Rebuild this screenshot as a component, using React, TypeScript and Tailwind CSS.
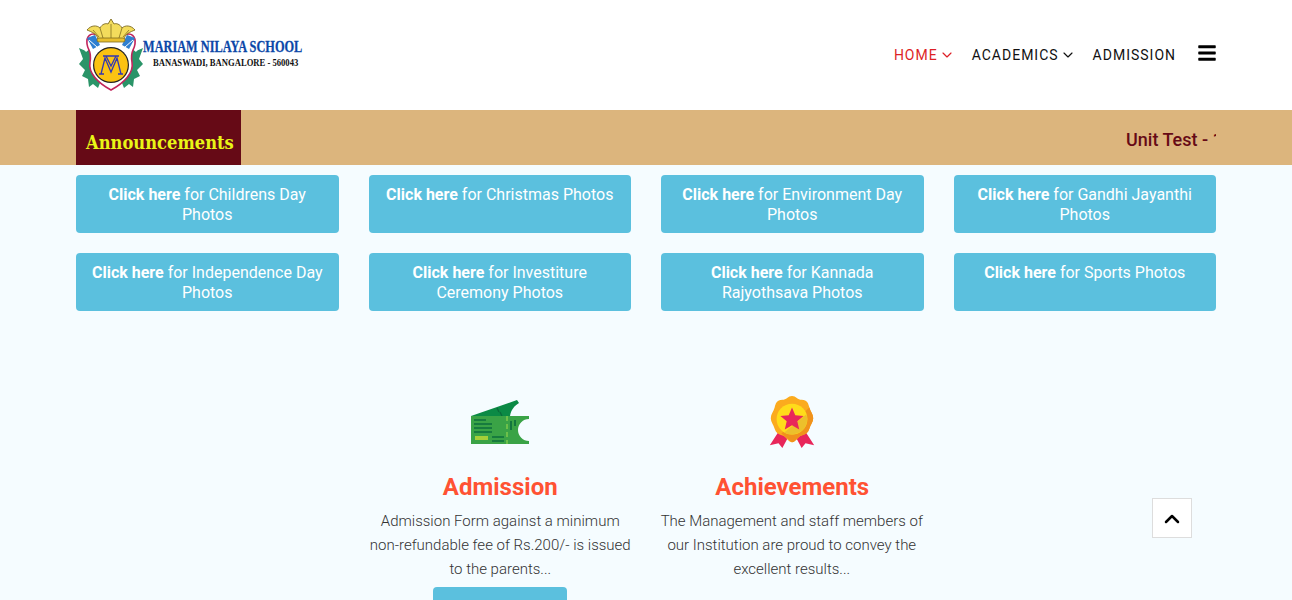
import { ChevronDown, ChevronUp } from "lucide-react";
import { FaBars } from "react-icons/fa";

const roboto = { fontFamily: "Roboto, sans-serif" };

const photoLinks = [
  "Childrens Day Photos",
  "Christmas Photos",
  "Environment Day Photos",
  "Gandhi Jayanthi Photos",
  "Independence Day Photos",
  "Investiture Ceremony Photos",
  "Kannada Rajyothsava Photos",
  "Sports Photos",
];

function Crest() {
  return (
    <svg width="66" height="74" viewBox="0 0 66 74" className="shrink-0">
      {/* leaves */}
      <g fill="#2a9468">
        <path d="M1 30 C4 32 6 31 8 34 L13 30 L13 40 L20 46 L24 60 L30 66 L22 65 L20 70 L15 66 L11 69 L10 61 L4 58 L7 52 L1 46 L5 41 Z" />
        <path d="M65 30 C62 32 60 31 58 34 L53 30 L53 40 L46 46 L42 60 L36 66 L44 65 L46 70 L51 66 L55 69 L56 61 L62 58 L59 52 L65 46 L61 41 Z" />
      </g>
      {/* shield */}
      <path d="M9 26 C8 18 13 14 19 17 C24 21 28 19 33 18 C38 19 42 21 47 17 C53 14 58 18 57 26 C56 33 52 33 54 44 C56 55 46 65 33 72 C20 65 10 55 12 44 C14 33 10 33 9 26 Z" fill="#fff" stroke="#c2255c" strokeWidth="1.6" />
      {/* ribbons */}
      <path d="M9 20 L17 17 L22 27 L15 31 Z" fill="#2f7fd0" />
      <path d="M57 20 L49 17 L44 27 L51 31 Z" fill="#2f7fd0" />
      <path d="M11 22 L19 29 M55 22 L47 29" stroke="#fff" strokeWidth="1" />
      {/* medallion */}
      <circle cx="33" cy="47" r="18" fill="#222" />
      <circle cx="33" cy="47" r="16.8" fill="#fbc312" />
      <path d="M23 56 L27 40 L33 54 L39 40 L43 56 M25 38 L41 38 M28 38 L33 48 L38 38 M21 56 L26 56 M40 56 L45 56" fill="none" stroke="#3338b0" strokeWidth="1.3" />
      {/* crown */}
      <path d="M9 12 C14 14 19 16 20 21 L46 21 C47 16 52 14 57 12 C53 7 47 7 44 10 C42 6 38 5 36 6 L33 1 L30 6 C28 5 24 6 22 10 C19 7 13 7 9 12 Z" fill="#f3dc5c" stroke="#7d6a1e" strokeWidth="0.9" />
      <path d="M22 10 L25 20 M33 6 L33 20 M44 10 L41 20 M15 12 L21 19 M51 12 L45 19" stroke="#8f7a24" strokeWidth="0.9" />
      <rect x="19" y="20" width="28" height="4" rx="2" fill="#e8c02e" stroke="#7d6a1e" strokeWidth="0.8" />
    </svg>
  );
}

function TicketIcon() {
  return (
    <svg width="58" height="44" viewBox="0 0 58 44" className="mb-[5px] block">
      <path d="M0 16 L46 0 L48 3 C43 6 40 10 39 16 Z" fill="#0b8a45" />
      <path d="M26 8 L28 12 M29 12 L31 16" stroke="#0a6b3a" strokeWidth="1.4" />
      <path d="M0 16 H58 V19 A11 11 0 0 0 58 41 V44 H0 Z" fill="#3aa346" />
      <path d="M36 16 V44" stroke="#6cc04a" strokeWidth="2" strokeDasharray="5 3" />
      <path d="M3 20 H15 M3 24 H21 M3 28 H21 M3 32 H21 M21 37 H33 M21 41 H33 M40 21 V30 M44 20 V26" stroke="#0d6f3d" strokeWidth="1.7" />
      <rect x="4" y="36" width="13" height="4" fill="#a6cf38" />
    </svg>
  );
}

function MedalIcon() {
  return (
    <svg width="46" height="54" viewBox="0 0 46 56" className="block">
      <path d="M9 38 L0 52 L9 50 L13 55 L20 42 Z" fill="#e8265a" />
      <path d="M37 38 L46 52 L37 50 L33 55 L26 42 Z" fill="#e8265a" />
      <path d="M23 1 C27 1 29 5 33 5 C39 5 40 9 41 13 C42 17 45 20 45 24 C45 28 42 31 41 35 C40 39 37 41 33 42 C29 43 27 49 23 49 C19 49 17 43 13 42 C9 41 6 39 5 35 C4 31 1 28 1 24 C1 20 4 17 5 13 C6 9 7 5 13 5 C17 5 19 1 23 1 Z" fill="#fbab1e" />
      <path d="M41 13 C42 17 45 20 45 24 C45 28 42 31 41 35 C40 39 37 41 33 42 C29 43 27 49 23 49 L12 40 Z" fill="#f0921c" />
      <circle cx="23" cy="25" r="16" fill="#ffdc1a" />
      <path d="M38 20 A16 16 0 0 1 15 39 Z" fill="#ecc02c" />
      <path d="M23 13 L26.4 21 L35 21.7 L28.5 27.3 L30.5 35.8 L23 31.3 L15.5 35.8 L17.5 27.3 L11 21.7 L19.6 21 Z" fill="#e8265a" />
    </svg>
  );
}

function Feature({
  icon,
  title,
  lines,
  shifted,
  button,
}: {
  icon: React.ReactNode;
  title: string;
  lines: string[];
  shifted?: boolean;
  button?: boolean;
}) {
  return (
    <div className="flex flex-col items-center text-center">
      <div className="flex h-[54px] items-end">{icon}</div>
      <h3 className={`mt-[22px] text-[24px] font-bold leading-[32px] text-[#ff5233] ${shifted ? "pl-[1px]" : ""}`}>
        {title}
      </h3>
      <p className={`mt-[6px] whitespace-nowrap text-[15px] font-light leading-[24px] text-[#333] ${shifted ? "pl-[1px]" : "pr-[1px]"}`}>
        {lines.map((line) => (
          <span key={line} className="block">
            {line}
          </span>
        ))}
      </p>
      {button && <div className="mt-[6px] h-[38px] w-[134px] rounded-[4px] bg-[#5bc0de]" />}
    </div>
  );
}

export default function App() {
  return (
    <div className="relative h-[600px] overflow-hidden bg-[#f5fcff]" style={roboto}>
      <header className="h-[110px] bg-white">
        <div className="mx-auto flex h-full w-[1140px] items-start justify-between">
          <div className="ml-[2px] mt-[18px] flex">
            <Crest />
            <div className="ml-[-1px] mt-[20px] whitespace-nowrap font-['Liberation_Serif',serif] font-bold">
              <div className="w-[160px] origin-left scale-x-[0.704] text-[17.5px] leading-[16px] text-[#0b47a8] [-webkit-text-stroke:0.3px_#0b47a8]">
                MARIAM NILAYA SCHOOL
              </div>
              <div className="ml-[10px] mt-[3px] w-[146px] origin-left scale-x-[0.86] text-[10px] leading-[11px] text-[#111]">
                BANASWADI, BANGALORE - 560043
              </div>
            </div>
          </div>
          <nav className="mt-[45px] flex items-start text-[14px] uppercase leading-[20px] tracking-[1px] text-[#111]">
            <a className="flex items-center text-[#dd1f26]">
              HOME
              <ChevronDown size={16} strokeWidth={1.75} className="ml-[1px]" />
            </a>
            <a className="ml-[17px] flex items-center">
              ACADEMICS
              <ChevronDown size={16} strokeWidth={1.75} className="ml-[1px]" />
            </a>
            <a className="ml-[17px]">ADMISSION</a>
            <FaBars className="ml-[22px] mt-[-2px] h-[20px] w-[18px] text-black" />
          </nav>
        </div>
      </header>

      <div className="h-[55px] bg-[#dcb57d]">
        <div className="mx-auto flex h-full w-[1140px]">
          <div className="flex w-[165px] shrink-0 items-center justify-center bg-[#660a16] pl-[2px] pt-[9px] font-['DejaVu_Serif',serif] text-[#e9f516]">
            <span className="scale-x-[0.86] whitespace-nowrap text-[19px] font-bold">Announcements</span>
          </div>
          <div className="flex-1 overflow-hidden whitespace-nowrap pl-[885px] text-[18px] font-medium leading-[59px] text-[#660a16]">
            Unit Test - 1
          </div>
        </div>
      </div>

      <main className="mx-auto w-[1140px] pt-[10px]">
        <div className="grid grid-cols-4 gap-x-[30px] gap-y-[20px]">
          {photoLinks.map((label) => (
            <a
              key={label}
              className="h-[58px] rounded-[4px] bg-[#5bc0de] px-[12px] pt-[10px] text-center text-[16px] leading-[20px] text-white"
            >
              <strong className="font-bold">Click here</strong> for {label}
            </a>
          ))}
        </div>

        <div className="mt-[84px] grid grid-cols-4 gap-x-[30px]">
          <div />
          <Feature
            icon={<TicketIcon />}
            title="Admission"
            shifted
            button
            lines={[
              "Admission Form against a minimum",
              "non-refundable fee of Rs.200/- is issued",
              "to the parents...",
            ]}
          />
          <Feature
            icon={<MedalIcon />}
            title="Achievements"
            lines={[
              "The Management and staff members of",
              "our Institution are proud to convey the",
              "excellent results...",
            ]}
          />
          <div />
        </div>
      </main>

      <button className="absolute left-[1152px] top-[498px] flex h-[40px] w-[40px] items-center justify-center border border-[#ddd] bg-white text-black">
        <ChevronUp size={24} strokeWidth={2.5} className="mt-[1px]" />
      </button>
    </div>
  );
}
